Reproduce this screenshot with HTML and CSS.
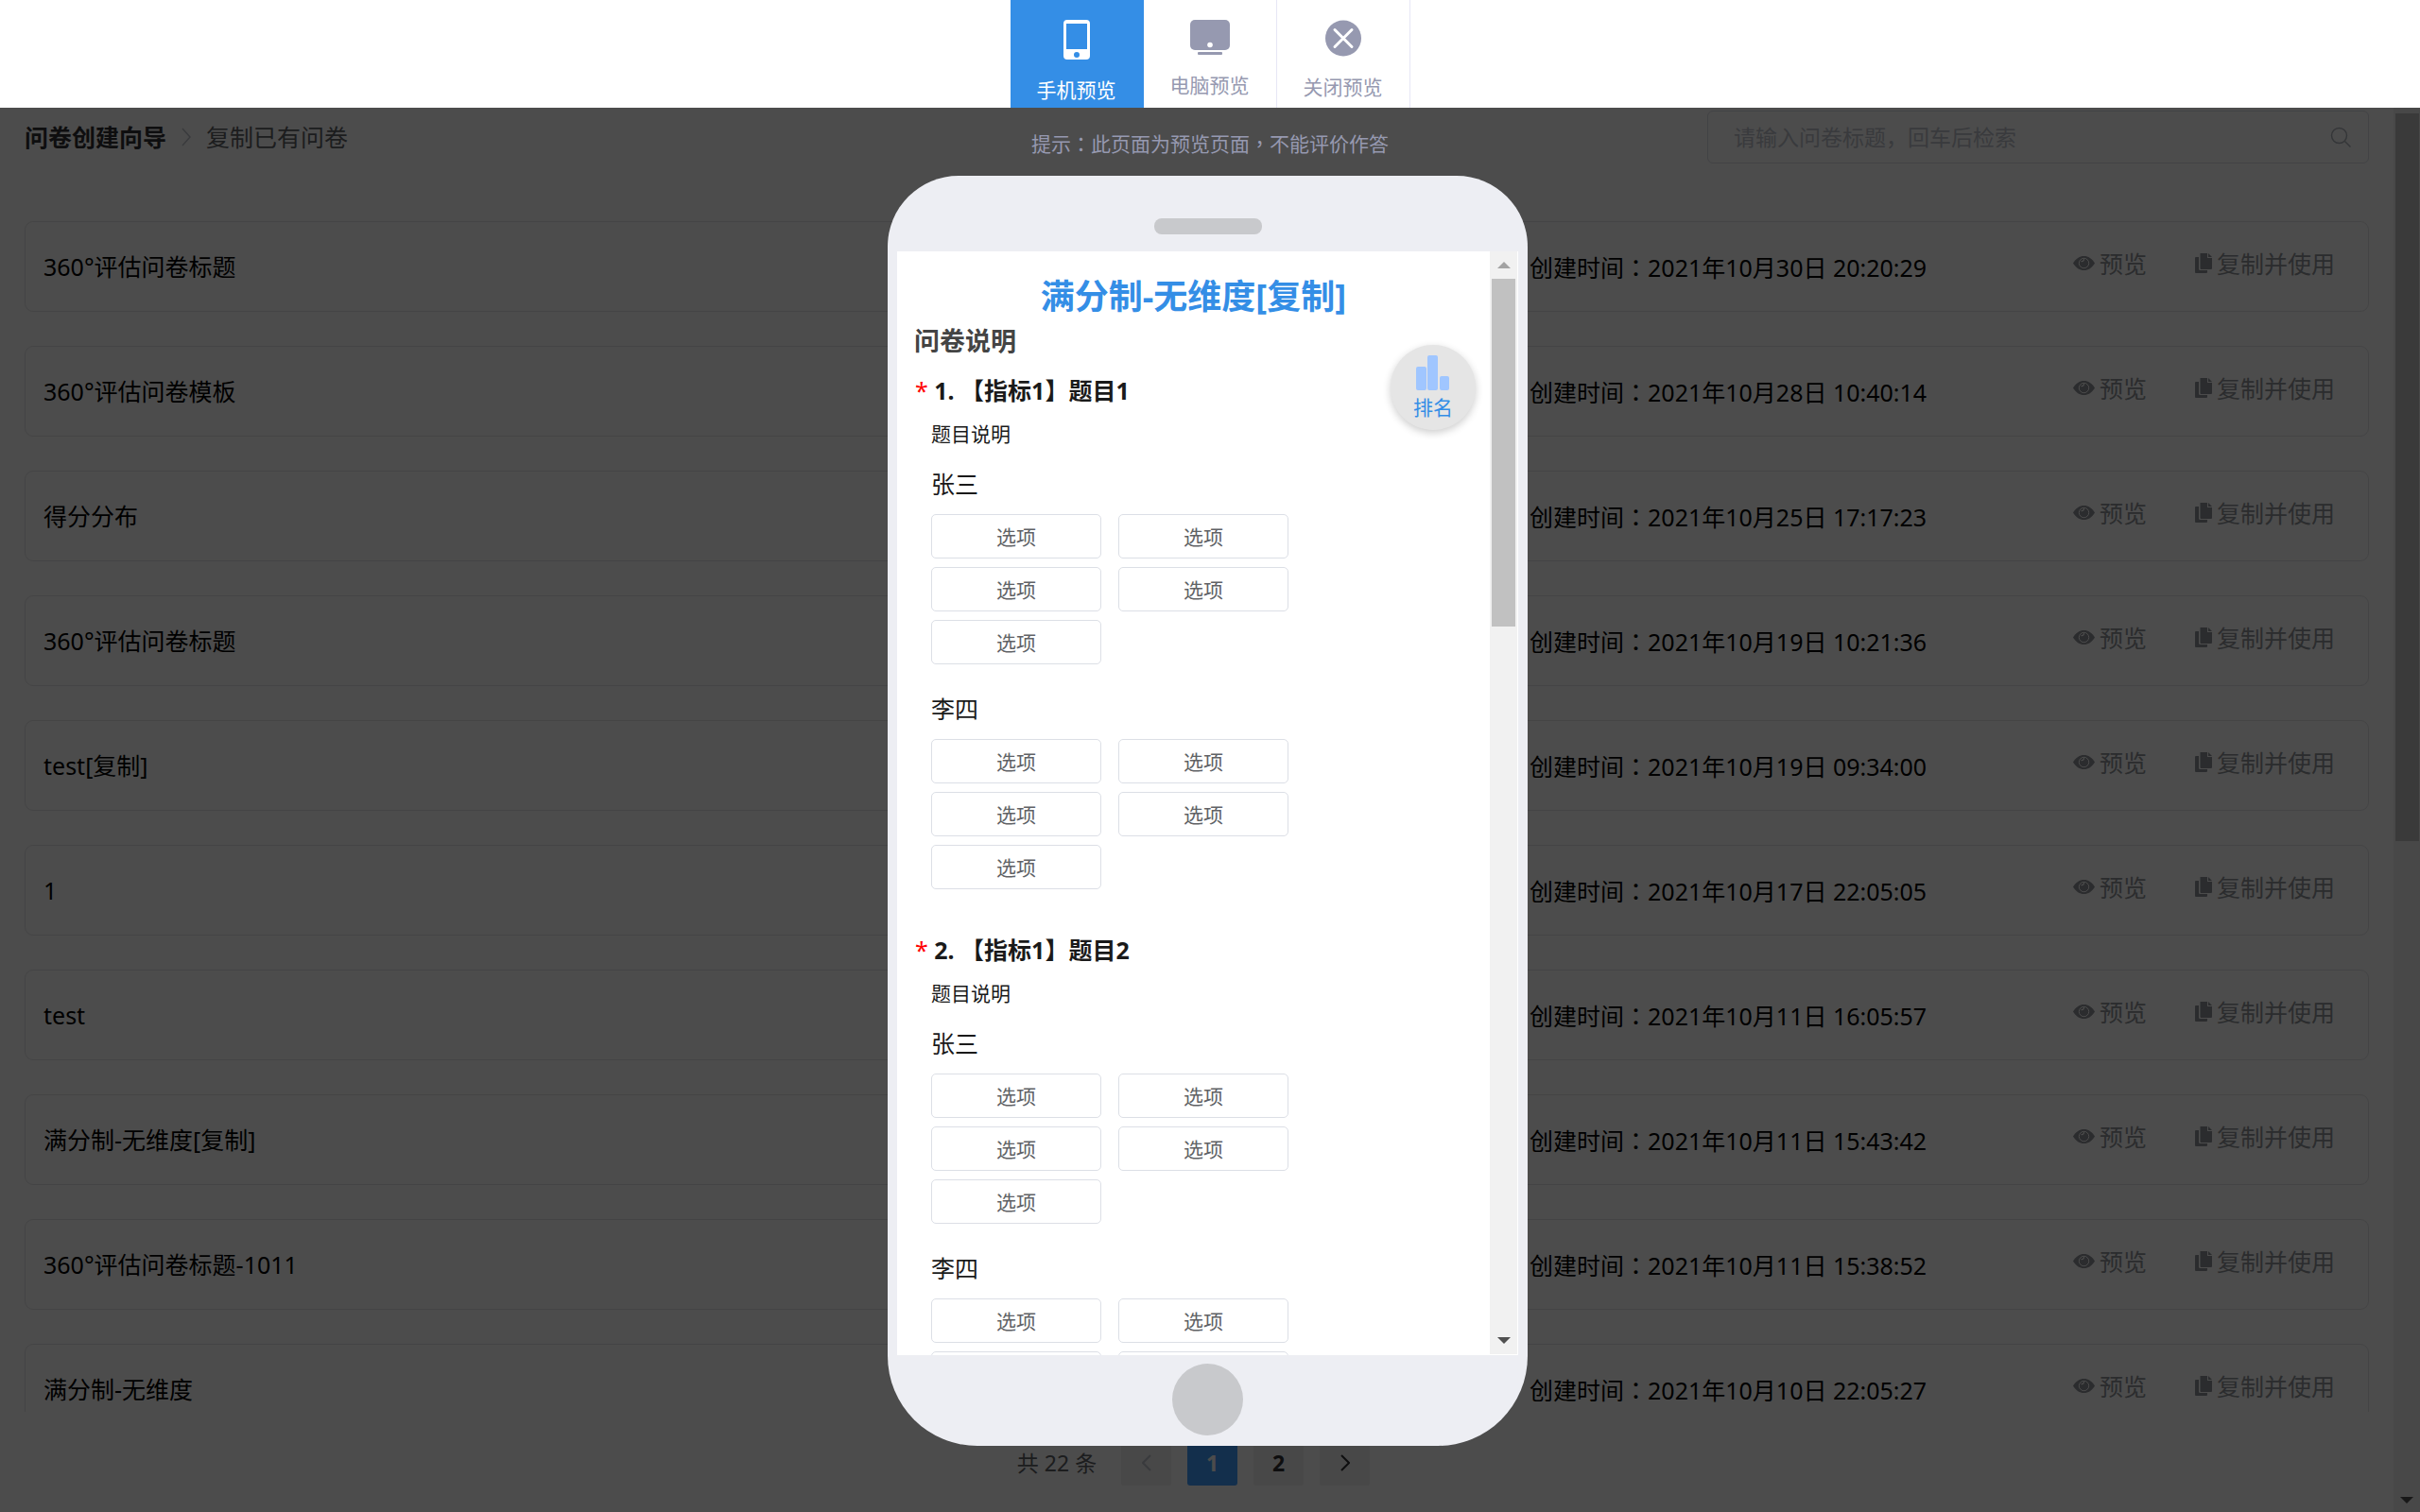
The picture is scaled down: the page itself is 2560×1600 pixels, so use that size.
FILE: index.html
```html
<!DOCTYPE html>
<html lang="zh-CN">
<head>
<meta charset="utf-8">
<title>问卷预览</title>
<link rel="stylesheet" href="styles.css">
</head>
<body>
<svg class="sprite" aria-hidden="true">
  <symbol id="eye" viewBox="0 0 23 15">
    <path d="M0 7.500C3 2.500 7 0 11.500 0S20 2.500 23 7.500C20 12.500 16 15 11.500 15S3 12.500 0 7.500Z" fill="currentColor"/>
    <circle cx="11.500" cy="7.500" r="5.200" fill="none" stroke="#fff" stroke-width="1"/>
    <path d="M8.500 5.500a2.300 2.300 0 0 0 3-2.600" fill="none" stroke="#fff" stroke-width="1.200"/>
  </symbol>
  <symbol id="copy" viewBox="0 0 18 21">
    <path d="M0 5a1 1 0 0 1 1-1h3v12.500a1.500 1.500 0 0 0 1.500 1.500H13v2a1 1 0 0 1-1 1H1a1 1 0 0 1-1-1Z" fill="currentColor"/>
    <path d="M5.500 0H13v5h5v11a1 1 0 0 1-1 1H6.500a1 1 0 0 1-1-1Z" fill="currentColor"/>
    <path d="M14 0l4 4h-4Z" fill="currentColor"/>
  </symbol>
</svg>

<header class="toolbar">
  <button type="button" class="tab tab-active">
    <svg width="28" height="42" viewBox="0 0 28 42"><path fill-rule="evenodd" fill="currentColor" d="M4 0h20a4 4 0 0 1 4 4v34a4 4 0 0 1-4 4H4a4 4 0 0 1-4-4V4a4 4 0 0 1 4-4ZM3 4v27h22V4ZM14 34a3 3 0 1 0 0 6 3 3 0 0 0 0-6Z"/></svg>
    <span>手机预览</span>
  </button>
  <button type="button" class="tab">
    <svg width="42" height="37" viewBox="0 0 42 37"><rect width="42" height="32" rx="5" fill="currentColor"/><circle cx="21" cy="26.500" r="2.800" fill="#fff"/><rect x="8" y="34" width="26" height="3" rx="1" fill="currentColor"/></svg>
    <span>电脑预览</span>
  </button>
  <button type="button" class="tab">
    <svg width="38" height="39" viewBox="0 0 38 39"><circle cx="19" cy="19.500" r="19" fill="currentColor"/><path d="M10 10.500l18 18M28 10.500l-18 18" stroke="#fff" stroke-width="3" stroke-linecap="round"/></svg>
    <span>关闭预览</span>
  </button>
</header>

<div class="stage">
  <main class="survey-page">
    <div class="page-head">
      <nav class="crumbs">
        <a href="#">问卷创建向导</a>
        <svg width="10" height="20" viewBox="0 0 10 20"><path d="M1 1l8 9-8 9" fill="none" stroke="#c0c4cc" stroke-width="1.500"/></svg>
        <span>复制已有问卷</span>
      </nav>
      <label class="search">
        <input type="search" placeholder="请输入问卷标题，回车后检索" aria-label="检索问卷">
        <svg width="22" height="22" viewBox="0 0 22 22"><circle cx="9.500" cy="9.500" r="8" fill="none" stroke="#b0b4bc" stroke-width="1.500"/><path d="M15.500 15.500l6 6" stroke="#b0b4bc" stroke-width="1.500"/></svg>
      </label>
    </div>

    <ul class="cards" id="cards"></ul>

    <nav class="pager">
      <span>共 22 条</span>
      <button type="button" disabled aria-label="上一页"><svg width="10" height="18" viewBox="0 0 10 18"><path d="M9 1L1 9l8 8" fill="none" stroke="#c0c4cc" stroke-width="2"/></svg></button>
      <button type="button" class="current">1</button>
      <button type="button">2</button>
      <button type="button" aria-label="下一页"><svg width="10" height="18" viewBox="0 0 10 18"><path d="M1 1l8 8-8 8" fill="none" stroke="#303133" stroke-width="2"/></svg></button>
    </nav>
  </main>
  <div class="page-scroll"><i class="page-thumb"></i><i class="arrow-down"></i></div>

  <section class="preview">
    <p class="hint">提示<span class="mark" lang="zh-TW">：</span>此页面为预览页面<span class="mark" lang="zh-TW">，</span>不能评价作答</p>
    <div class="phone">
      <i class="speaker"></i>
      <div class="screen">
        <div class="form">
          <h1>满分制-无维度[复制]</h1>
          <h2>问卷说明</h2>
          <div id="questions"></div>
        </div>
        <div class="form-scroll"><i class="arrow-up"></i><i class="form-thumb"></i><i class="arrow-down"></i></div>
        <button type="button" class="rank">
          <svg width="36" height="37" viewBox="0 0 36 37" fill="#a0c6ff"><rect y="12" width="11" height="25" rx="2"/><rect x="12" width="11" height="37" rx="2"/><rect x="25" y="22" width="10" height="15" rx="2"/></svg>
          <span>排名</span>
        </button>
      </div>
      <i class="home"></i>
    </div>
  </section>
</div>
<script src="app.js"></script>
</body>
</html>
```
FILE: styles.css
```css
* { box-sizing: border-box; }

body {
  margin: 0;
  height: 100vh;
  display: flex;
  flex-direction: column;
  overflow: hidden;
  background: #fff;
  color: #000;
  font: 25px/36px "Noto Sans", "Noto Sans CJK SC", sans-serif;
}

button, input { font: inherit; color: inherit; }
button { border: 0; padding: 0; background: none; cursor: pointer; }
a { color: inherit; text-decoration: none; }
svg, i { display: block; flex: none; }
h1, h2, h3, h4, p, ul { margin: 0; padding: 0; list-style: none; }
.sprite { display: none; }

/* Punctuation centred in its full-width cell */
.mark { font-family: "Noto Sans CJK TC", sans-serif; }

/* Preview mode switch */
.toolbar { display: flex; justify-content: center; flex: none; height: 114px; }
.tab {
  display: flex;
  flex-direction: column;
  align-items: center;
  gap: 17px;
  width: 141px;
  padding-top: 21px;
  border-right: 1px solid #e6e6f5;
  color: #9699b0;
  font-size: 21px;
  line-height: 30px;
}
.tab-active { background: #348ee6; border-color: #348ee6; color: #fff; }

.stage { position: relative; flex: 1; display: flex; min-height: 0; }
.stage::after { content: ""; position: absolute; inset: 0; background: rgba(0, 0, 0, 0.7); }

/* Survey list behind the mask */
.survey-page {
  flex: 1;
  display: flex;
  flex-direction: column;
  min-width: 0;
  padding: 3px 26px 28px;
}
.page-head { display: flex; justify-content: space-between; align-items: center; }
.crumbs { display: flex; align-items: center; gap: 16px; color: #606266; }
.crumbs a { color: #303133; font-weight: 700; }
.search {
  display: flex;
  align-items: center;
  width: 700px;
  height: 56px;
  padding: 0 18px 0 27px;
  border: 1px solid #dcdfe6;
  border-radius: 6px;
}
.search input { flex: 1; padding: 0; border: 0; outline: 0; background: none; font-size: 23px; }
.search input::placeholder { color: #c0c4cc; opacity: 1; }

.cards {
  flex: 1;
  display: flex;
  flex-direction: column;
  gap: 36px;
  min-height: 0;
  margin-top: 61px;
  overflow: hidden;
}
.card {
  flex: none;
  display: grid;
  grid-template-columns: 1fr 575px 312px;
  align-items: center;
  height: 96px;
  padding: 0 0 0 19px;
  border: 1px solid #e4e4e6;
  border-radius: 9px;
}
.actions { display: flex; gap: 51px; padding-bottom: 7px; color: #909399; }
.actions a { display: flex; align-items: center; gap: 5px; }

.pager {
  display: flex;
  justify-content: center;
  align-items: center;
  gap: 17px;
  margin-top: 29px;
  padding-right: 7px;
  color: #606266;
  font-size: 23px;
}
.pager span { margin-right: 9px; }
.pager button {
  display: grid;
  place-items: center;
  width: 53px;
  height: 49px;
  border-radius: 3px;
  background: #f0f0f1;
  color: #303133;
  font-weight: 700;
}
.pager .current { background: #409eff; color: #fff; }

.page-scroll {
  flex: none;
  display: flex;
  flex-direction: column;
  justify-content: space-between;
  align-items: center;
  width: 28px;
  padding: 6px 0 9px;
  background: #f1f1f1;
}
.page-thumb { width: 25px; height: calc(52% + 5px); background: #c1c1c1; }
.arrow-up, .arrow-down { border: 7px solid transparent; }
.arrow-up { border-top: 0; border-bottom-color: #a3a3a3; }
.arrow-down { border-bottom: 0; border-top-color: #505050; }

/* Phone */
.preview {
  position: absolute;
  inset: 0;
  z-index: 1;
  display: flex;
  flex-direction: column;
  align-items: center;
  padding: 19px 0 70px;
}
.hint { height: 36px; margin-bottom: 17px; color: #9699b0; font-size: 21px; }
.phone {
  flex: 1;
  display: flex;
  flex-direction: column;
  align-items: center;
  width: 677px;
  min-height: 0;
  margin-right: 5px;
  padding: 45px 0 11px;
  border-radius: 75px 75px 95px 95px;
  background: #edeef3;
}
.speaker { width: 114px; height: 17px; border-radius: 8px; background: #c8c9cc; }
.screen {
  position: relative;
  flex: 1;
  display: flex;
  width: 657px;
  min-height: 0;
  margin: 18px 0 9px;
  background: #fff;
}
.home { width: 75px; height: 76px; border-radius: 50%; background: #c8c9cc; }

.form { flex: 1; overflow: hidden; padding: 24px 18px 0; color: #1a1a1a; }
.form h1 { color: #348ee6; font-size: 36px; line-height: 48px; text-align: center; }
.form h2 { margin: 5px 0 14px; color: #444; font-size: 27px; line-height: 36px; }
.question { padding-left: 18px; margin-bottom: 44px; }
.question h3 { margin: 0 0 11px -17px; font-size: 25px; line-height: 40px; }
.question h3 b { color: #f00; font-weight: 400; }
.question p { margin-bottom: 20px; font-size: 21px; line-height: 30px; }
.question h4 { margin-bottom: 14px; font-weight: 400; font-size: 25px; }
.options { display: grid; grid-template-columns: 180px 180px; gap: 9px 18px; }
.options + h4 { margin-top: 29px; }
.options button {
  height: 47px;
  border: 1px solid #dcdfe6;
  border-radius: 5px;
  color: #606266;
  font-size: 21px;
  line-height: 30px;
}

.form-scroll {
  display: flex;
  flex-direction: column;
  align-items: center;
  width: 29px;
  margin: 0 1px 1px 0;
  padding: 11px 0;
  background: #f1f1f1;
}
.form-thumb { width: 25px; height: calc(32% + 2px); margin: 11px 0 auto; background: #c1c1c1; }

.rank {
  position: absolute;
  top: 99px;
  right: 45px;
  display: flex;
  flex-direction: column;
  align-items: center;
  gap: 3px;
  width: 90px;
  height: 90px;
  padding-top: 11px;
  border-radius: 50%;
  background: #e5e5e5;
  box-shadow: 0 3px 9px rgba(0, 0, 0, 0.2);
  color: #348ee6;
  font-size: 21px;
  line-height: 30px;
}
```
FILE: app.js
```js
const surveys = [
  ["360°评估问卷标题", "2021年10月30日 20:20:29"],
  ["360°评估问卷模板", "2021年10月28日 10:40:14"],
  ["得分分布", "2021年10月25日 17:17:23"],
  ["360°评估问卷标题", "2021年10月19日 10:21:36"],
  ["test[复制]", "2021年10月19日 09:34:00"],
  ["1", "2021年10月17日 22:05:05"],
  ["test", "2021年10月11日 16:05:57"],
  ["满分制-无维度[复制]", "2021年10月11日 15:43:42"],
  ["360°评估问卷标题-1011", "2021年10月11日 15:38:52"],
  ["满分制-无维度", "2021年10月10日 22:05:27"]
];

document.getElementById("cards").innerHTML = surveys.map(([name, time]) => `
  <li class="card">
    <span>${name}</span>
    <span>创建时间<span class="mark" lang="zh-TW">：</span>${time}</span>
    <div class="actions">
      <a href="#"><svg width="23" height="15"><use href="#eye"/></svg>预览</a>
      <a href="#"><svg width="18" height="21"><use href="#copy"/></svg>复制并使用</a>
    </div>
  </li>`).join("");

const people = ["张三", "李四"];
const options = '<button type="button">选项</button>'.repeat(5);

document.getElementById("questions").innerHTML = [1, 2].map(n => `
  <section class="question">
    <h3><b>*</b> ${n}. 【指标1】题目${n}</h3>
    <p>题目说明</p>
    ${people.map(name => `<h4>${name}</h4><div class="options">${options}</div>`).join("")}
  </section>`).join("");
```
